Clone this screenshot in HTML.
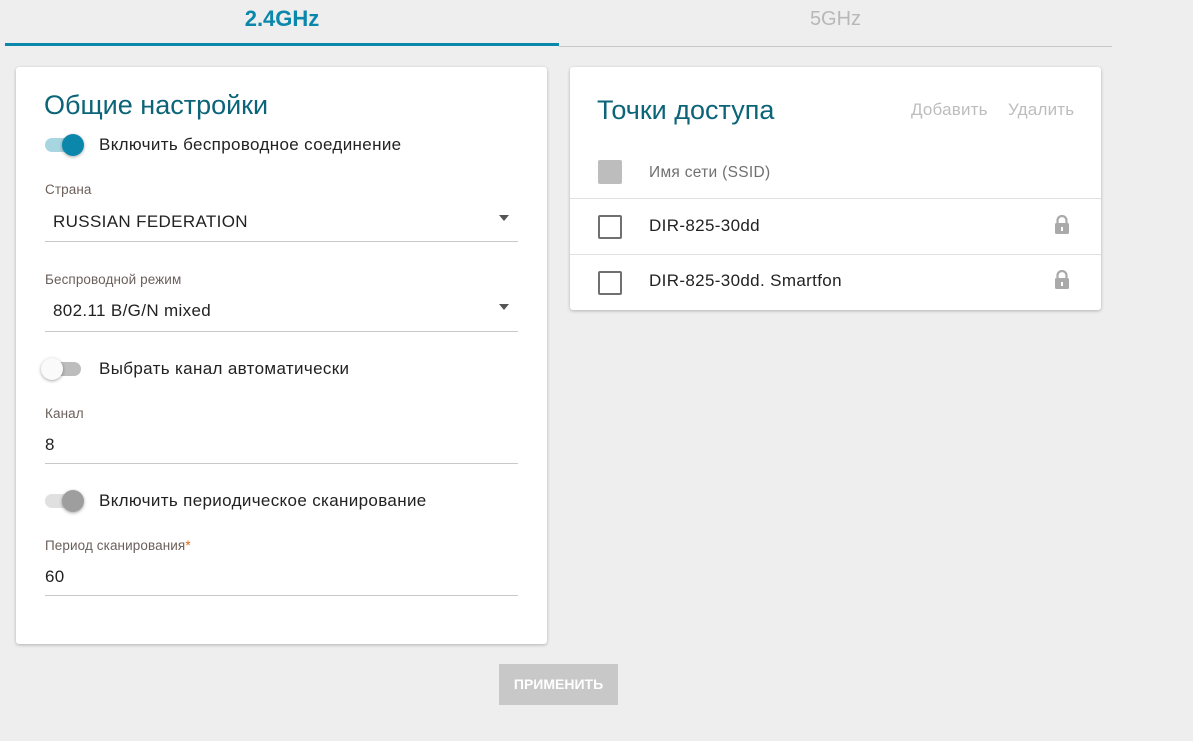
<!DOCTYPE html><html><head><meta charset="utf-8"><style>
*{box-sizing:border-box}body{margin:0;width:1193px;height:741px;background:#eeeeee;font-family:"Liberation Sans",sans-serif;position:relative;overflow:hidden;color:#222}
.a{position:absolute}
.card{position:absolute;background:#fff;border-radius:3px;box-shadow:0 1px 3px rgba(0,0,0,.25)}
.lbl{position:absolute;font-size:13.5px;color:#6b5f5a;letter-spacing:.1px}
.val{position:absolute;font-size:17px;color:#222;letter-spacing:.35px}
.line{position:absolute;height:1px;background:#c8c8c8;left:29px;width:473px}
.tr{position:absolute;height:14px;width:36px;border-radius:7px}
.th{position:absolute;width:22px;height:22px;border-radius:50%;box-shadow:0 1px 3px rgba(0,0,0,.35)}
.cb{position:absolute;left:28px;width:24px;height:24px;border:2px solid #707070;border-radius:2px}
.lock{position:absolute;left:484px;width:16px;height:19px}
</style></head><body>
<div class="a" style="left:5px;top:6px;width:554px;text-align:center;font-size:22px;font-weight:bold;color:#0a87ab">2.4GHz</div>
<div class="a" style="left:559px;top:8px;width:553px;text-align:center;font-size:20px;color:#b8b8b8">5GHz</div>
<div class="a" style="left:5px;top:43px;width:554px;height:3px;background:#0a87ab"></div>
<div class="a" style="left:559px;top:46px;width:553px;height:1px;background:#c8c8c8"></div>

<div class="card" style="left:16px;top:67px;width:531px;height:577px">
<div class="a" style="left:28px;top:23px;font-size:27px;color:#0b6478">Общие настройки</div>
<div class="tr" style="left:29px;top:71px;background:#a7d6e1"></div><div class="th" style="left:46px;top:67px;background:#0a87ab"></div>
<div class="val" style="left:83px;top:68px">Включить беспроводное соединение</div>
<div class="lbl" style="left:29px;top:115px">Страна</div>
<div class="val" style="left:37px;top:145px">RUSSIAN FEDERATION</div>
<div class="a" style="left:483px;top:148px;border:5px solid transparent;border-top:6px solid #555;border-bottom:0"></div>
<div class="line" style="top:174px"></div>
<div class="lbl" style="left:29px;top:205px">Беспроводной режим</div>
<div class="val" style="left:37px;top:234px">802.11 B/G/N mixed</div>
<div class="a" style="left:483px;top:237px;border:5px solid transparent;border-top:6px solid #555;border-bottom:0"></div>
<div class="line" style="top:264px"></div>
<div class="tr" style="left:29px;top:295px;background:#bdbdbd"></div><div class="th" style="left:25px;top:291px;background:#fafafa"></div>
<div class="val" style="left:83px;top:292px">Выбрать канал автоматически</div>
<div class="lbl" style="left:29px;top:339px">Канал</div>
<div class="val" style="left:29px;top:368px">8</div>
<div class="line" style="top:396px"></div>
<div class="tr" style="left:29px;top:427px;background:#e0e0e0"></div><div class="th" style="left:46px;top:423px;background:#9e9e9e"></div>
<div class="val" style="left:83px;top:424px">Включить периодическое сканирование</div>
<div class="lbl" style="left:29px;top:471px">Период сканирования<span style="color:#e06a1a">*</span></div>
<div class="val" style="left:29px;top:500px">60</div>
<div class="line" style="top:528px"></div>
</div>

<div class="card" style="left:570px;top:67px;width:531px;height:243px">
<div class="a" style="left:27px;top:28px;font-size:27px;color:#0b6478">Точки доступа</div>
<div class="a" style="left:341px;top:33px;font-size:17px;color:#bdbdbd;letter-spacing:.2px">Добавить</div>
<div class="a" style="left:438px;top:33px;font-size:17px;color:#bdbdbd;letter-spacing:.2px">Удалить</div>
<div class="a" style="left:28px;top:93px;width:24px;height:24px;background:#bdbdbd;border-radius:2px"></div>
<div class="a" style="left:79px;top:97px;font-size:15.5px;color:#707070;letter-spacing:.3px">Имя сети (SSID)</div>
<div class="a" style="left:0;top:131px;width:531px;height:1px;background:#e0e0e0"></div>
<div class="cb" style="top:148px"></div>
<div class="val" style="left:79px;top:149px">DIR-825-30dd</div>
<svg class="lock" style="top:148px" viewBox="0 0 16 19"><path d="M3.5 8V5.5a4.5 4.5 0 0 1 9 0V8" fill="none" stroke="#aaa" stroke-width="2.2"/><rect x="1" y="8" width="14" height="11" rx="1.5" fill="#aaa"/><rect x="7" y="12" width="2" height="4" fill="#fff"/></svg>
<div class="a" style="left:0;top:187px;width:531px;height:1px;background:#e0e0e0"></div>
<div class="cb" style="top:204px"></div>
<div class="val" style="left:79px;top:204px">DIR-825-30dd. Smartfon</div>
<svg class="lock" style="top:203px" viewBox="0 0 16 19"><path d="M3.5 8V5.5a4.5 4.5 0 0 1 9 0V8" fill="none" stroke="#aaa" stroke-width="2.2"/><rect x="1" y="8" width="14" height="11" rx="1.5" fill="#aaa"/><rect x="7" y="12" width="2" height="4" fill="#fff"/></svg>
</div>

<div class="a" style="left:499px;top:664px;width:119px;height:41px;background:#c8c8c8;color:#fff;font-size:14px;font-weight:bold;text-align:center;line-height:41px">ПРИМЕНИТЬ</div>
</body></html>
